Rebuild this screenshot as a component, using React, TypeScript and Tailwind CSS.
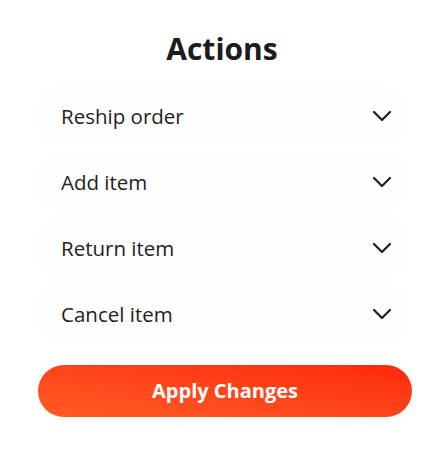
import { useState } from 'react';

const actions = ['Reship order', 'Add item', 'Return item', 'Cancel item'];

const Chevron = () => (
    <svg width="20" height="12" viewBox="0 0 20 12" fill="none" className="text-[#1f1f1f]">
        <path d="M2 2l8 8 8-8" stroke="currentColor" strokeWidth="2.2" strokeLinecap="round" strokeLinejoin="round" />
    </svg>
);

export default function App() {
    const [open, setOpen] = useState<string | null>(null);

    return (
        <div className="w-[444px] h-[453px] bg-white font-['Open_Sans',sans-serif] px-[37px] pt-[28px]">
            <h1 className="text-center text-[30px] font-bold text-[#1c1c1c] leading-[42px]">Actions</h1>

            <div className="mt-[18px] flex flex-col gap-[11px]">
                {actions.map((label) => (
                    <button
                        key={label}
                        onClick={() => setOpen(open === label ? null : label)}
                        className="h-[55px] w-full flex items-center justify-between pl-[24px] pr-[15px] rounded-[26px] bg-[#fefefe] shadow-[0_0_5px_rgba(0,0,0,0.025)]"
                    >
                        <span className="text-[20.5px] font-medium text-[#222] pt-[1px]">{label}</span>
                        <Chevron />
                    </button>
                ))}
            </div>

            <button className="mt-[24px] h-[52px] w-[374px] ml-px rounded-full bg-gradient-to-tr from-[#ff5a26] to-[#ff2608] text-white text-[20px] font-bold">
                Apply Changes
            </button>
        </div>
    );
}
